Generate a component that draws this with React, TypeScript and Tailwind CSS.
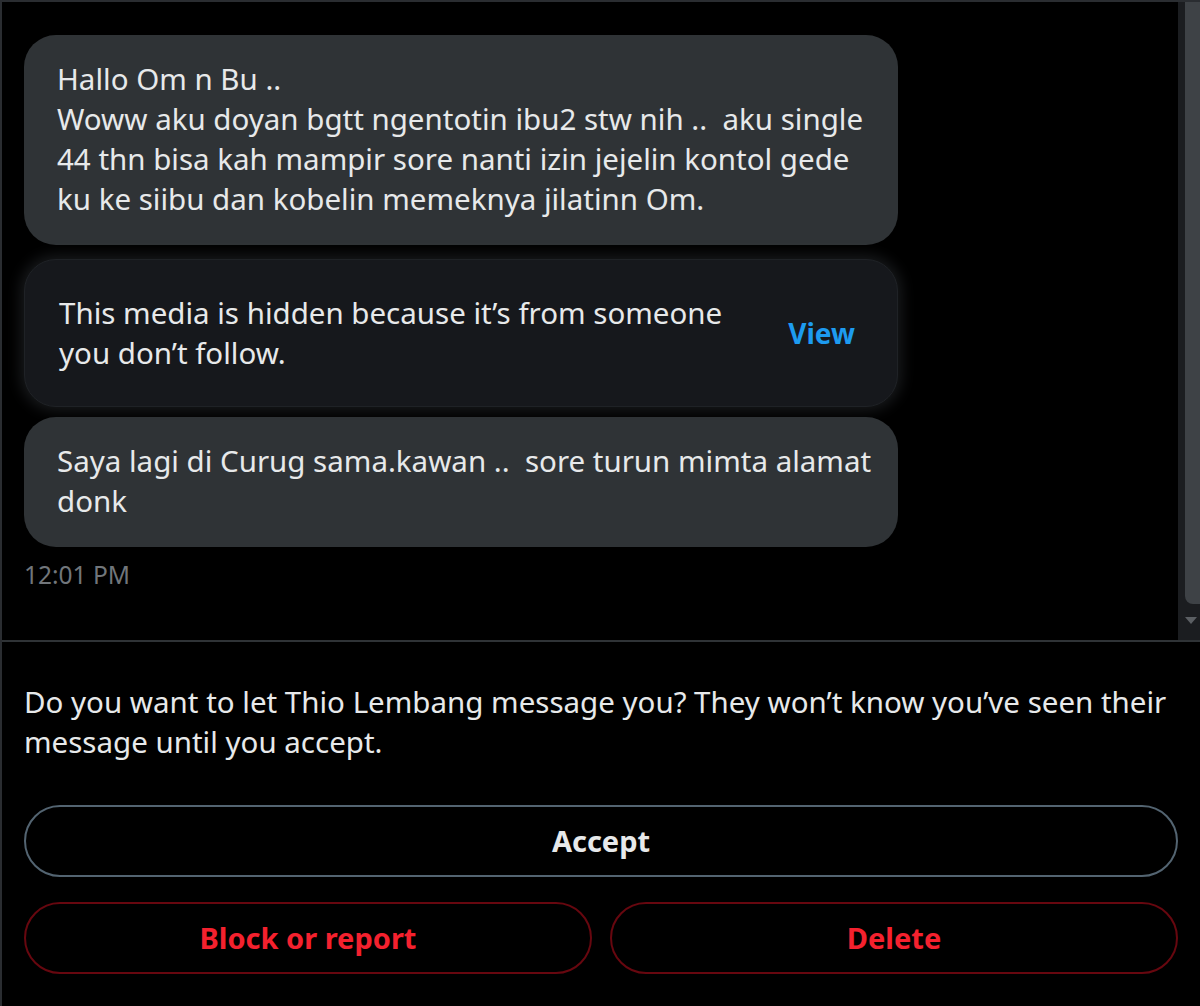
import React from 'react'

const font = { fontFamily: '"Noto Sans", "Open Sans", Arial, sans-serif' }

function Bubble({ children, className = '' }: { children: React.ReactNode; className?: string }) {
  return (
    <div
      className={`w-[874px] rounded-[32px] bg-[#2f3336] pb-[26px] pl-[33px] pr-[26px] pt-[24px] text-[29.5px] leading-[40px] text-[#e7e9ea] ${className}`}
    >
      {children}
    </div>
  )
}

export default function App() {
  return (
    <div
      className="flex h-[1006px] w-[1200px] flex-col overflow-hidden border-l-2 border-t-2 border-[#2a2d31] bg-black"
      style={font}
    >
      <div className="flex h-[638px] shrink-0">
        <div className="flex flex-1 flex-col pl-[22px] pt-[33px]">
          <Bubble>
            Hallo Om n Bu ..
            <br />
            Woww aku doyan bgtt ngentotin ibu2 stw nih ..&nbsp; aku single 44 thn bisa kah mampir sore nanti izin
            jejelin kontol gede ku ke siibu dan kobelin memeknya jilatinn Om.
          </Bubble>

          <div className="mt-[14px] flex h-[148px] w-[874px] items-center justify-between rounded-[32px] border border-[#1f2226] bg-[#16181c] pl-[34px] pr-[42px] shadow-[0_0_14px_4px_rgba(70,75,80,0.35)]">
            <p className="w-[700px] text-[29.5px] leading-[40px] text-[#e7e9ea]">
              This media is hidden because it’s from someone you don’t follow.
            </p>
            <span className="text-[28px] font-bold text-[#1d9bf0]">View</span>
          </div>

          <Bubble className="mt-[10px]">Saya lagi di Curug sama.kawan ..&nbsp; sore turun mimta alamat donk</Bubble>

          <div className="pt-[13px] text-[24.5px] leading-[30px] text-[#71767b]">12:01 PM</div>
        </div>

        <div className="relative w-[22px] bg-[#1b1d20]">
          <div className="ml-auto h-[602px] w-[15px] rounded-bl-[8px] bg-[#3e4246]" />
          <svg className="absolute left-[7px] top-[615px]" width="12" height="8" viewBox="0 0 12 8">
            <path d="M0 0 H12 L6 7 Z" fill="#5b5f63" />
          </svg>
        </div>
      </div>

      <div className="h-[2px] bg-[#2f3336]" />

      <div className="flex flex-1 flex-col px-[22px] pt-[40px]">
        <p className="text-[29.5px] leading-[40px] text-[#e7e9ea]">
          Do you want to let Thio Lembang message you? They won’t know you’ve seen their message until you accept.
        </p>

        <button className="mt-[43px] flex h-[72px] items-center justify-center rounded-full border-2 border-[#536471] text-[29px] font-bold text-[#e7e9ea]">
          Accept
        </button>

        <div className="mt-[25px] flex gap-[18px]">
          <button className="flex h-[72px] flex-1 items-center justify-center rounded-full border-2 border-[#67070f] text-[29px] font-bold text-[#f4212e]">
            Block or report
          </button>
          <button className="flex h-[72px] flex-1 items-center justify-center rounded-full border-2 border-[#67070f] text-[29px] font-bold text-[#f4212e]">
            Delete
          </button>
        </div>
      </div>
    </div>
  )
}
